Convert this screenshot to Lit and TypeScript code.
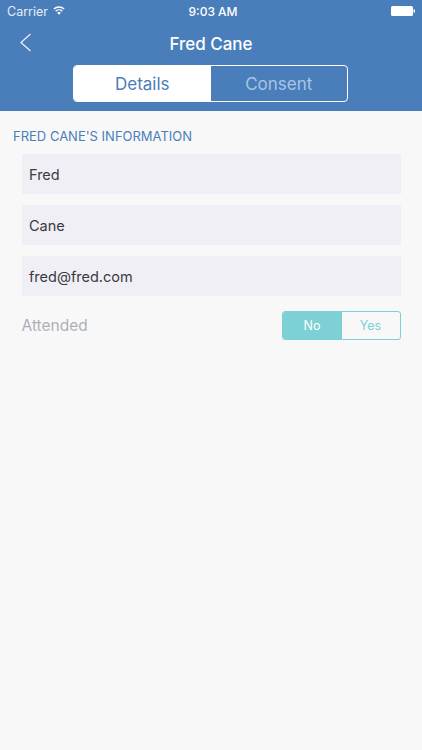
import { LitElement, html, css } from "lit";
import { customElement } from "lit/decorators.js";

@customElement("app-root")
export class AppRoot extends LitElement {
  static styles = css`
    :host { display: block; width: 422px; height: 750px; background: #f8f8f8; font-family: Inter, "Noto Sans", sans-serif; overflow: hidden; }
    .head { background: #4a7eba; height: 111px; color: #fff; display: flex; flex-direction: column; box-sizing: border-box; }
    .status { height: 22px; display: grid; grid-template-columns: 1fr auto 1fr; align-items: center; padding: 0 7px; font-size: 12.5px; }
    .status .left { display: flex; align-items: center; gap: 5px; color: #e6edf6; }
    .status .left svg { margin-bottom: 2px; }
    .status .time { font-weight: 500; font-size: 12px; margin-left: 4px; }
    .status .right { display: flex; justify-content: flex-end; }
    .nav { height: 43px; display: grid; grid-template-columns: 1fr auto 1fr; align-items: center; font-size: 17px; font-weight: 500; }
    .nav svg { display: block; margin: 0 0 2px 19px; }
    .seg { width: 275px; height: 37px; margin-left: 73px; display: flex; box-sizing: border-box; border: 1px solid #fff; border-radius: 4px; overflow: hidden; font-size: 17px; }
    .seg div { flex: 1; display: flex; align-items: center; justify-content: center; }
    .seg .on { background: #fff; color: #4a7eba; }
    .seg .off { color: #a9c5e6; }
    .title { margin: 17px 0 0 13px; font-size: 13px; line-height: 17px; color: #4a7eba; }
    .form { margin: 9px 21.5px 0; display: flex; flex-direction: column; }
    .field { height: 40px; background: #f0eff5; display: flex; align-items: center; padding-left: 7.5px; font-size: 14.5px; color: #3a3a40; margin-bottom: 11px; }
    .row { display: flex; justify-content: space-between; align-items: center; margin-top: 4px; height: 29px; }
    .label { font-size: 15.5px; color: #aeb0b8; }
    .toggle { width: 119px; height: 29px; box-sizing: border-box; border: 1px solid #7dd1d4; border-radius: 3px; overflow: hidden; display: flex; font-size: 12.5px; }
    .toggle div { display: flex; align-items: center; justify-content: center; }
    .toggle .on { width: 59px; background: #7dd1d4; color: #fff; }
    .toggle .off { flex: 1; color: #7dd1d4; }
  `;

  render() {
    return html`
      <div class="head">
        <div class="status">
          <div class="left">
            <span>Carrier</span>
            <svg width="12" height="9" viewBox="0 0 13 10">
              <path d="M6.5 9.8 4.4 7.4a3 3 0 0 1 4.2 0Z" fill="#fff"/>
              <path d="M2.8 5.7a5.5 5.5 0 0 1 7.4 0M.8 3.3a8.4 8.4 0 0 1 11.4 0" fill="none" stroke="#fff" stroke-width="1.5"/>
            </svg>
          </div>
          <div class="time">9:03 AM</div>
          <div class="right">
            <svg width="24" height="10" viewBox="0 0 24 10">
              <rect x="0" y="0" width="22" height="10" rx="1.5" fill="#fff"/>
              <rect x="22.5" y="3.2" width="1.5" height="3.6" rx=".7" fill="#fff"/>
            </svg>
          </div>
        </div>
        <div class="nav">
          <svg width="13" height="19" viewBox="0 0 13 19">
            <path d="M11.5 1 2 9.5l9.5 8.5" fill="none" stroke="#e8eff8" stroke-width="1.3"/>
          </svg>
          <div>Fred Cane</div>
          <div></div>
        </div>
        <div class="seg">
          <div class="on">Details</div>
          <div class="off">Consent</div>
        </div>
      </div>
      <div class="title">FRED CANE'S INFORMATION</div>
      <div class="form">
        <div class="field">Fred</div>
        <div class="field">Cane</div>
        <div class="field">fred@fred.com</div>
        <div class="row">
          <div class="label">Attended</div>
          <div class="toggle"><div class="on">No</div><div class="off">Yes</div></div>
        </div>
      </div>
    `;
  }
}
